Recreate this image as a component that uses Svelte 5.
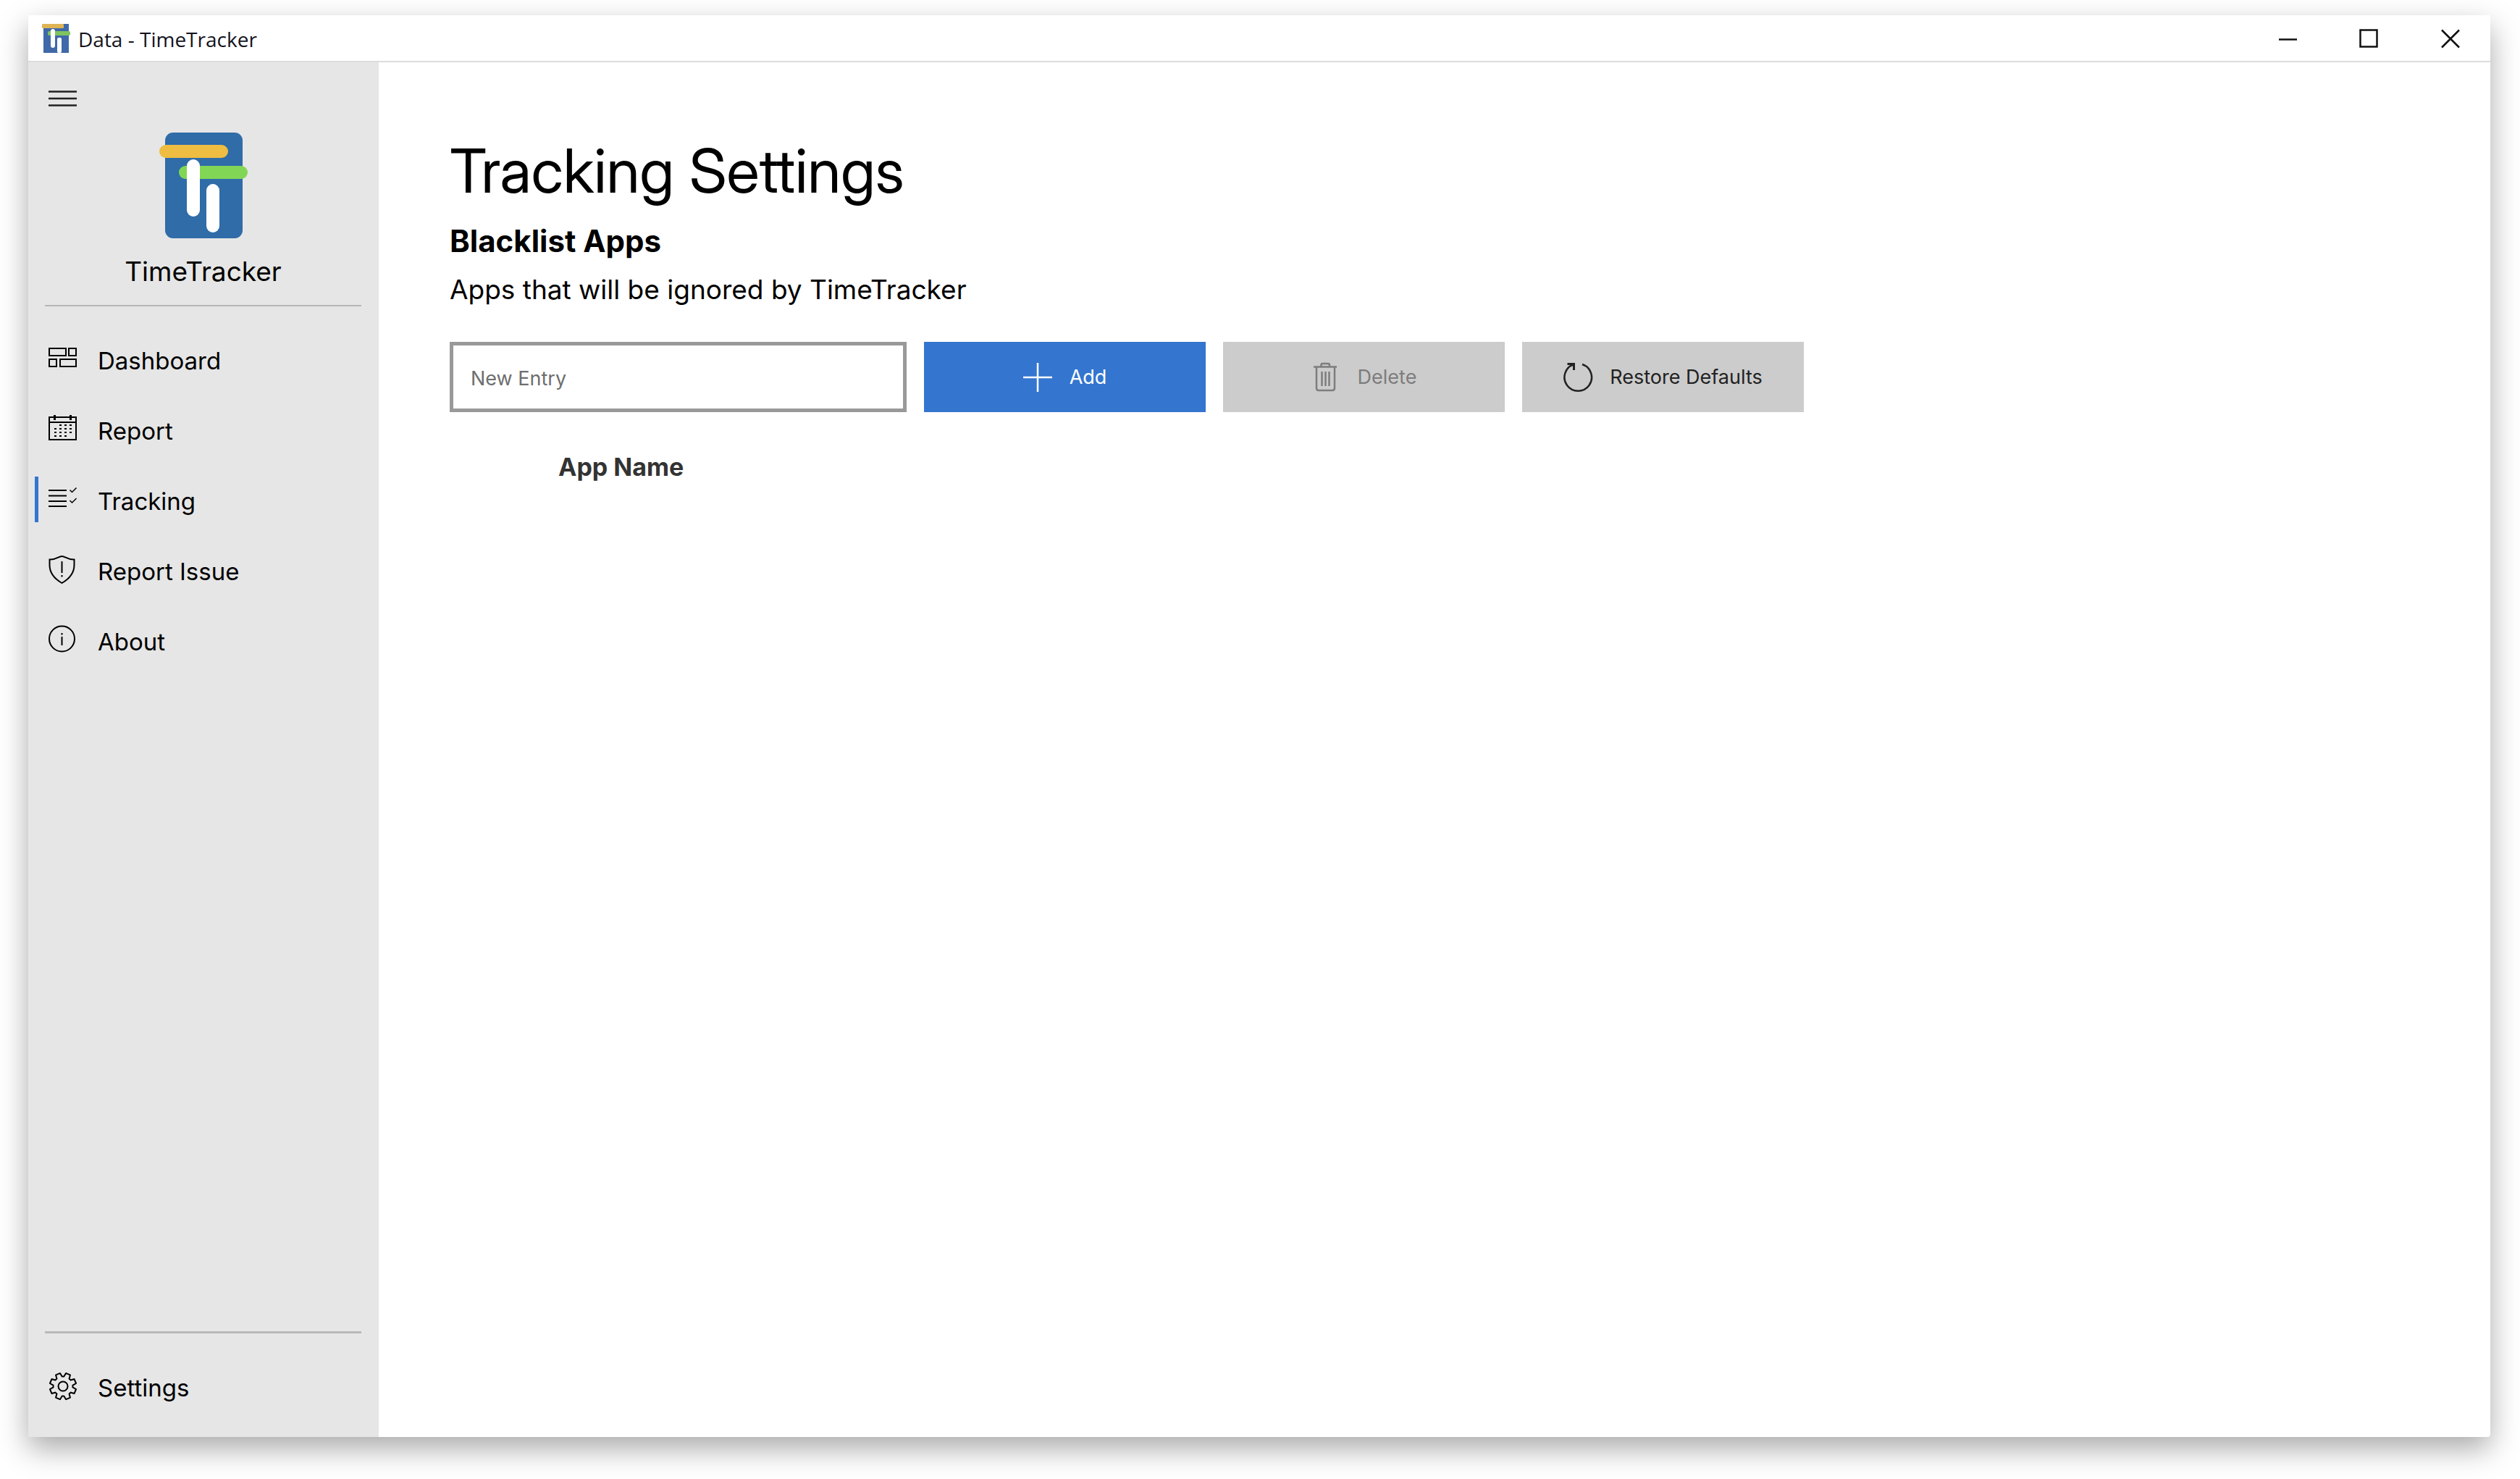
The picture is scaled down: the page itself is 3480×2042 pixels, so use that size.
<script>
  const nav = [
    { id: 'dashboard', label: 'Dashboard' },
    { id: 'report', label: 'Report' },
    { id: 'tracking', label: 'Tracking' },
    { id: 'issue', label: 'Report Issue' },
    { id: 'about', label: 'About' }
  ];
  let active = $state('tracking');
  let entry = $state('');

  const dots = [
    [15, 13], [22, 13], [29, 13],
    [8, 18], [15, 18], [22, 18], [29, 18],
    [8, 23], [15, 23], [22, 23], [29, 23],
    [8, 28], [15, 28], [22, 28]
  ];

  // Outline of an eight-toothed gear centred on 20,20
  const gear = (() => {
    const pts = [];
    for (let i = 0; i < 8; i++) {
      const a = i * 45 + 22.5 - 90;
      for (const [d, r] of [[-17, 13.5], [-10, 18.5], [10, 18.5], [17, 13.5]]) {
        const t = ((a + d) * Math.PI) / 180;
        pts.push(`${(20 + r * Math.cos(t)).toFixed(2)},${(20 + r * Math.sin(t)).toFixed(2)}`);
      }
    }
    return pts.join(' ');
  })();
</script>

{#snippet icon(id)}
  <svg class="icon" viewBox="0 0 40 40" aria-hidden="true">
    {#if id === 'dashboard'}
      <path d="M1 5H24V15H1ZM28 5H38V15H28ZM1 20H11V30H1ZM16 20H38V30H16Z" />
    {:else if id === 'report'}
      <path d="M1 3H38V34H1ZM1 10H38" />
      <path class="heavy" d="M8.500 0V7M30.500 0V7" />
      {#each dots as [x, y]}
        <rect class="solid" {x} {y} width="3" height="2" />
      {/each}
    {:else if id === 'tracking'}
      <path d="M0 7H25M0 14.500H25M0 22H25M0 29H25" />
      <path class="thin" d="M29.500 6.500L32.500 9.500L38.500 3.500M29.500 21L32.500 24L38.500 18" />
    {:else if id === 'issue'}
      <path d="M18.500 1C23 1 26 6 35.500 5.500V13C35.500 24 29 32 18.500 38C8 32 1.500 24 1.500 13V5.500C11 6 14 1 18.500 1ZM18.500 8V24M18.500 27V29.500" />
    {:else if id === 'about'}
      <circle cx="18.500" cy="18" r="17.500" />
      <path d="M18.500 10V12.500M18.500 15V27" />
    {:else if id === 'settings'}
      <polygon points={gear} stroke-linejoin="round" />
      <circle cx="20" cy="20" r="6.500" />
    {:else if id === 'add'}
      <path d="M0 20H40M20 0V40" />
    {:else if id === 'delete'}
      <path d="M3 5.500H35M7 5.500V35Q7 38 10 38H29Q32 38 32 35V5.500M13.500 5V3Q13.500 1 15.500 1H23Q25 1 25 3V5M14.500 12V32M19.500 12V32M24.500 12V32" />
    {:else if id === 'restore'}
      <path d="M26 2A18.800 18.800 0 1 1 14.500 2" />
      <path class="heavy" d="M5.500 1.500H14.500V10" />
    {/if}
  </svg>
{/snippet}

<div class="window">
  <header class="titlebar">
    <svg class="mini" viewBox="0 0 39 40" aria-hidden="true">
      <rect x="2" width="35" height="40" fill="#3f69a8" />
      <rect width="30" height="6" rx="1" fill="#dfb455" />
      <rect x="8" y="10" width="31" height="6" rx="2" fill="#7fc35f" />
      <rect x="12" y="7" width="6" height="26" rx="3" fill="#fff" />
      <rect x="21" y="19" width="6" height="21" rx="2" fill="#fff" />
    </svg>
    <span class="title">Data - TimeTracker</span>
    <div class="controls">
      <button aria-label="Minimize"><svg viewBox="0 0 26 26"><path d="M1 14.500H26" /></svg></button>
      <button aria-label="Maximize"><svg viewBox="0 0 26 26"><path d="M1.500 1.500H24.500V24.500H1.500Z" /></svg></button>
      <button aria-label="Close"><svg viewBox="0 0 26 26"><path d="M2 1.500L26 25.500M26 1.500L2 25.500" /></svg></button>
    </div>
  </header>

  <div class="body">
    <aside>
      <button class="burger" aria-label="Toggle navigation">
        <svg viewBox="0 0 39 22"><path d="M0 1.500H39M0 11H39M0 20.500H39" /></svg>
      </button>
      <div class="brand">
        <svg class="logo" viewBox="0 0 122 146" aria-hidden="true">
          <rect x="8" width="107" height="146" rx="11" fill="#2f6ca8" />
          <rect y="17" width="95" height="18" rx="9" fill="#efbd42" />
          <rect x="27" y="46" width="95" height="18" rx="9" fill="#82d655" />
          <rect x="38" y="37" width="18" height="79" rx="9" fill="#fff" />
          <rect x="65" y="71" width="18" height="67" rx="9" fill="#fff" />
        </svg>
        <span>TimeTracker</span>
      </div>
      <nav>
        {#each nav as item}
          <a href="#{item.id}" class:active={active === item.id} onclick={() => (active = item.id)}>
            {@render icon(item.id)}
            <span>{item.label}</span>
          </a>
        {/each}
      </nav>
      <div class="bottom">
        <a href="#settings">
          {@render icon('settings')}
          <span>Settings</span>
        </a>
      </div>
    </aside>

    <main>
      <h1>Tracking Settings</h1>
      <h2>Blacklist Apps</h2>
      <p>Apps that will be ignored by TimeTracker</p>
      <form onsubmit={(e) => e.preventDefault()}>
        <input type="text" placeholder="New Entry" aria-label="New Entry" bind:value={entry} />
        <button class="btn primary" type="submit">{@render icon('add')}<span>Add</span></button>
        <button class="btn" type="button" disabled>{@render icon('delete')}<span>Delete</span></button>
        <button class="btn" type="button">{@render icon('restore')}<span>Restore Defaults</span></button>
      </form>
      <table>
        <thead>
          <tr><th scope="col">App Name</th></tr>
        </thead>
      </table>
    </main>
  </div>
</div>

<style>
  :global(body) {
    background: #fff;
    font-family: Inter, "Liberation Sans", sans-serif;
    color: #000;
  }
  :global(#app) {
    box-sizing: border-box;
    min-height: 100vh;
    padding: 21px 41px 58px 39px;
    display: flex;
    overflow: hidden;
  }
  button {
    border: 0;
    padding: 0;
    background: none;
    font: inherit;
    color: inherit;
  }
  svg {
    display: block;
    fill: none;
    stroke: currentColor;
    stroke-width: 2;
    overflow: visible;
  }
  .window {
    flex: 1;
    display: flex;
    flex-direction: column;
    background: #fff;
    border-radius: 0 0 4px 4px;
    box-shadow: 0 16px 40px rgba(0, 0, 0, 0.34);
  }
  .titlebar {
    display: flex;
    align-items: center;
    height: 63px;
    border-bottom: 2px solid #dcdcdf;
    padding-left: 19px;
    font-family: "Open Sans", "Noto Sans", sans-serif;
    font-size: 28px;
    color: #14141e;
  }
  .mini {
    width: 39px;
    height: 40px;
    stroke: none;
  }
  .title {
    flex: 1;
    padding: 2px 0 0 11px;
  }
  .controls {
    display: flex;
    align-self: stretch;
  }
  .controls button {
    width: 112px;
    display: grid;
    place-items: center;
    color: #111;
  }
  .controls svg {
    width: 26px;
    height: 26px;
    stroke-width: 2.5;
  }
  .body {
    flex: 1;
    display: flex;
  }
  aside {
    width: 484px;
    box-sizing: border-box;
    flex: none;
    display: flex;
    flex-direction: column;
    background: #e6e6e6;
  }
  .burger {
    align-self: flex-start;
    margin: 39px 28px 0;
    color: #222;
  }
  .burger svg {
    width: 39px;
    height: 22px;
    stroke-width: 2.5;
  }
  .brand {
    display: flex;
    flex-direction: column;
    align-items: center;
    margin: 36px 24px 26px 23px;
    padding-bottom: 22px;
    border-bottom: 2px solid #b5b5b5;
    font-size: 37px;
    line-height: 48px;
  }
  .logo {
    width: 122px;
    height: 146px;
    margin-bottom: 22px;
    stroke: none;
  }
  nav {
    flex: 1;
  }
  a {
    position: relative;
    display: flex;
    align-items: center;
    gap: 28px;
    height: 97px;
    padding-left: 28px;
    color: #000;
    text-decoration: none;
    font-size: 33px;
  }
  .active::before {
    content: "";
    position: absolute;
    left: 9px;
    top: 15px;
    width: 5px;
    height: 63px;
    background: #3375cf;
  }
  .icon {
    width: 40px;
    height: 40px;
    flex: none;
  }
  a .icon {
    margin-bottom: 3px;
  }
  .btn .icon {
    stroke-width: 2.5;
  }
  .thin {
    stroke-width: 1.5;
  }
  .heavy {
    stroke-width: 3;
  }
  .solid {
    fill: currentColor;
    stroke: none;
  }
  .bottom {
    margin: 0 24px 0 23px;
    border-top: 3px solid #b9b9b9;
    padding: 26px 0 20px;
  }
  .bottom a {
    padding-left: 5px;
  }
  main {
    flex: 1;
    padding: 98px 98px 0;
  }
  h1,
  h2,
  p {
    margin: 0;
  }
  h1 {
    font-family: "Inter Display", Inter, sans-serif;
    font-size: 84px;
    line-height: 104px;
    font-weight: 400;
  }
  h2 {
    font-size: 42px;
    line-height: 52px;
    font-weight: 700;
    margin: 19px 0 17px;
  }
  p {
    font-size: 37px;
    line-height: 48px;
  }
  form {
    display: flex;
    gap: 24px;
    margin: 48px 0 50px;
    font-size: 27px;
  }
  input {
    box-sizing: border-box;
    width: 631px;
    height: 97px;
    border: 5px solid #999;
    padding: 4px 24px 0;
    font: inherit;
    background: #fff;
  }
  input::placeholder {
    color: #6e6e6e;
    opacity: 1;
  }
  .btn {
    width: 389px;
    height: 97px;
    display: flex;
    align-items: center;
    justify-content: center;
    gap: 24px;
    background: #ccc;
    color: #222;
  }
  .btn.primary {
    background: #3375cf;
    color: #fff;
  }
  .btn:disabled {
    color: #7d7d7d;
  }
  table {
    border-spacing: 0;
  }
  th {
    padding: 0 0 0 150px;
    font-size: 34px;
    line-height: 52px;
    font-weight: 700;
    color: #333;
    text-align: left;
  }
</style>
